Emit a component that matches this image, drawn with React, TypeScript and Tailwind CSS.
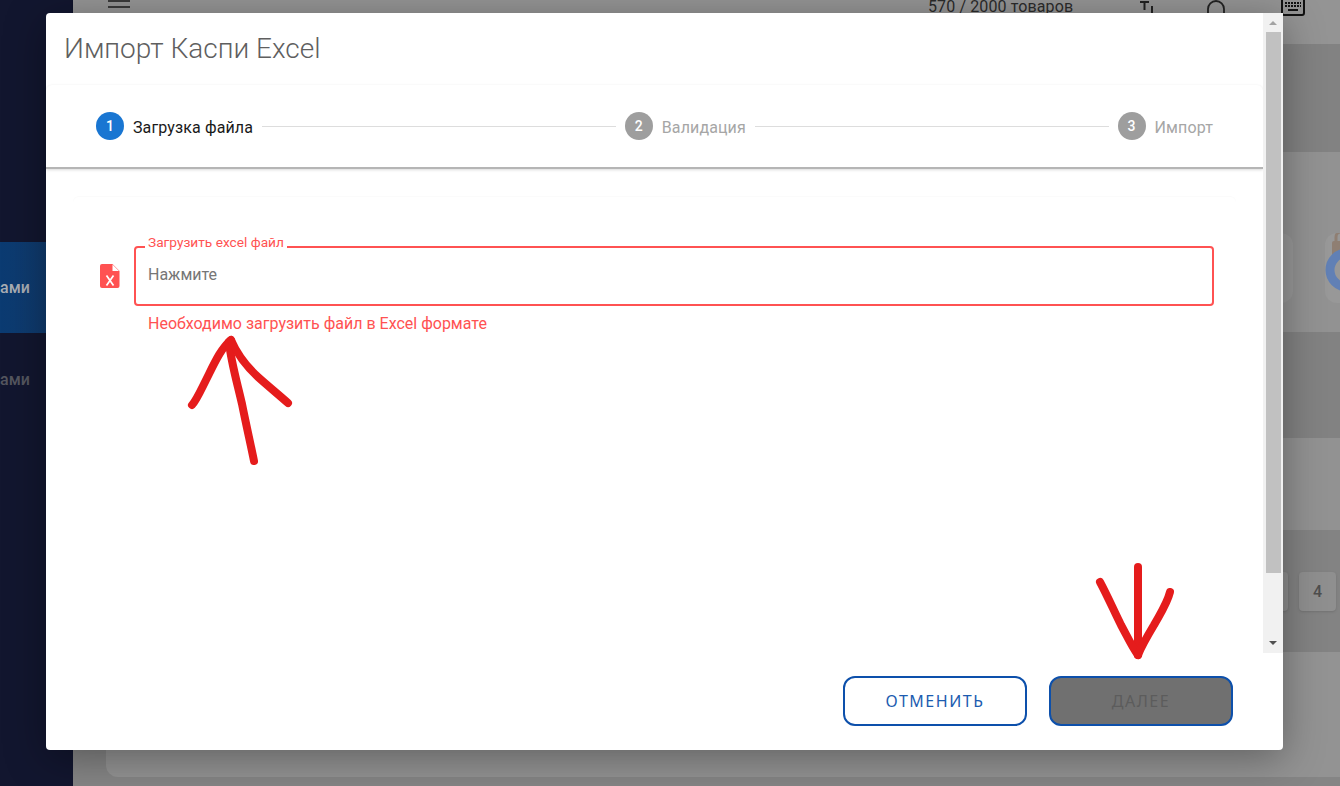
const Step = ({ n, label, active }: { n: number; label: string; active?: boolean }) => (
  <div className="flex items-center gap-[9px]">
    <div
      className={`flex h-7 w-7 items-center justify-center rounded-full text-sm font-medium text-white ${
        active ? "bg-[#1976d2]" : "bg-[#9e9e9e]"
      }`}
    >
      {n}
    </div>
    <span className={`pt-[3px] text-base tracking-[0.12px] ${active ? "text-[#1a1a1a]" : "text-[#a6a6a6]"}`}>{label}</span>
  </div>
);

const Scrollbar = () => (
  <div className="flex w-[20px] shrink-0 flex-col bg-[#f1f1f1]">
    <div className="flex h-[19px] items-center justify-center">
      <div className="h-0 w-0 border-x-[4px] border-b-[4px] border-x-transparent border-b-[#a3a3a3]" />
    </div>
    <div className="ml-[3px] h-[541px] w-[15px] bg-[#c1c1c1]" />
    <div className="flex flex-1 items-end justify-center pb-[8px]">
      <div className="h-0 w-0 border-x-[4px] border-t-[4px] border-x-transparent border-t-[#505050]" />
    </div>
  </div>
);

const FileIcon = () => (
  <svg width="20" height="24" viewBox="0 0 20 24" className="shrink-0">
    <path d="M2 0h10.5L19.500 7v15a2 2 0 0 1-2 2H2a2 2 0 0 1-2-2V2a2 2 0 0 1 2-2z" fill="#ff5252" />
    <path d="M12.500 0.500v6.500h6.500z" fill="#fff" />
    <path d="M6.500 11.500l7 10M13.500 11.500l-7 10" stroke="#fff" strokeWidth="1.700" fill="none" />
  </svg>
);

const Arrows = () => (
  <svg width="1340" height="786" viewBox="0 0 1340 786" className="pointer-events-none absolute left-0 top-0">
    <g fill="none" stroke="#e51c1c" strokeWidth="8" strokeLinecap="round" strokeLinejoin="round">
      <path d="M192 405c4-4 8-13 14-25 8-16 15-32 25-40" />
      <path d="M229 342c2 20 8 40 13 62 4 20 9 42 12 57" />
      <path d="M231 340c7 16 16 27 27 37 10 9 21 18 30 26" />
      <path d="M1138 567v88" />
      <path d="M1100 582c8 15 14 29 21 43 6 11 11 22 17 30" />
      <path d="M1170 592c-3 12-10 22-16 33-6 10-12 20-16 30" />
    </g>
  </svg>
);

export default function App() {
  return (
    <div className="relative flex h-[786px] w-[1340px] overflow-hidden bg-[#858585] font-['Roboto',sans-serif]">
      {/* sidebar */}
      <aside className="w-[73px] shrink-0 bg-[#12162f] pt-[242px] text-base font-medium">
        <div className="flex h-[91px] items-center bg-gradient-to-r from-[#0b3b72] to-[#123a6a] text-[#a8adb3]">ами</div>
        <div className="flex h-[93px] items-center text-[#55565f]">ами</div>
      </aside>

      {/* page behind the dialog */}
      <div className="flex min-w-0 flex-1 flex-col">
        <header className="flex h-[44px] shrink-0 items-start bg-[#949494] text-[#2b2b2b] shadow-[0_1px_3px_rgba(0,0,0,0.3)]">
          <svg width="22" height="9" className="ml-[35px]">
            <path d="M0 1h22M0 7h22" stroke="#3a3a3a" strokeWidth="2" />
          </svg>
          <span className="-mt-[5px] ml-[798px] whitespace-nowrap text-base tracking-[0.12px]">570 / 2000 товаров</span>
          <svg width="16" height="14" className="ml-[66px]">
            <path d="M1 2h9M5.500 2v8M13 6v8" stroke="#222" strokeWidth="2" fill="none" />
          </svg>
          <svg width="20" height="15" className="ml-[51px]">
            <path d="M2 15V9a8 8 0 0 1 16 0v6" stroke="#222" strokeWidth="1.800" fill="none" />
          </svg>
          <svg width="24" height="16" className="ml-[55px]">
            <rect x="1" y="-2" width="22" height="17" rx="2" stroke="#111" strokeWidth="2" fill="none" />
            <path d="M4 3h16M4 6h16" stroke="#111" strokeWidth="2" strokeDasharray="2 1" />
            <path d="M7 10h10" stroke="#111" strokeWidth="2" />
          </svg>
        </header>
        <div className="-mr-5 ml-[33px] flex flex-col overflow-hidden rounded-bl-xl">
          <div className="h-[108px] bg-[#828282]" />
          <div className="flex h-[180px] items-start gap-[32px] bg-[#929292] pl-[1115px] pt-[81px]">
            <div className="h-[70px] w-[72px] shrink-0 rounded-xl bg-[#989898]" />
            <div className="relative h-[70px] w-[60px] shrink-0 overflow-hidden rounded-xl bg-[#989898]">
              <svg width="40" height="70" className="absolute left-0 top-0">
                <rect x="7" y="8" width="18" height="17" rx="2" fill="#8f7f73" />
                <path d="M11 8V4a5 5 0 0 1 10 0v4" stroke="#8f7f73" strokeWidth="3" fill="none" />
                <circle cx="22" cy="37" r="17" stroke="#6180b5" strokeWidth="9" fill="none" />
              </svg>
            </div>
          </div>
          <div className="h-[106px] bg-[#828282]" />
          <div className="h-[92px] bg-[#929292]" />
          <div className="flex h-[122px] items-start gap-[11px] bg-[#838383] pl-[1145px] pt-[42px]">
            <div className="h-[39px] w-[37px] rounded bg-[#8f8f8f] shadow-sm" />
            <div className="flex h-[39px] w-[37px] items-center justify-center rounded bg-[#8f8f8f] text-base font-medium text-[#4e4e4e] shadow-sm">
              4
            </div>
          </div>
          <div className="h-[125px] bg-[#939393]" />
        </div>
      </div>

      {/* dialog */}
      <div className="absolute left-[46px] top-[13px] flex h-[737px] w-[1237px] flex-col rounded bg-white shadow-[0_8px_40px_rgba(0,0,0,0.35)]">
        <div className="flex min-h-0 flex-1">
          <div className="flex min-w-0 flex-1 flex-col">
            <div className="flex h-[72px] shrink-0 items-center pl-[18px] text-[28px] font-light text-[#5f5f5f]">Импорт Каспи Excel</div>
            <div className="flex h-[84px] shrink-0 items-center rounded-t-md border-b-2 border-[#b5b5b5] px-[50px] shadow-[0_1px_3px_rgba(0,0,0,0.15)]">
              <Step n={1} label="Загрузка файла" active />
              <div className="mx-[9px] h-px flex-1 bg-[#dddddd]" />
              <Step n={2} label="Валидация" />
              <div className="mx-[9px] h-px flex-1 bg-[#dddddd]" />
              <Step n={3} label="Импорт" />
            </div>
            <div className="mx-[27px] mt-[28px] flex items-start gap-[14px] rounded-t-md pl-[27px] pr-[22px] pt-[49px] shadow-[0_-1px_1px_rgba(0,0,0,0.02)]">
              <div className="pt-[18px]">
                <FileIcon />
              </div>
              <div className="flex-1">
                <div className="relative flex h-[60px] items-center rounded border-2 border-[#ff5252] pb-[3px] pl-3 text-base text-[#767676]">
                  <span className="absolute -top-[15px] left-[9px] bg-white px-[3px] text-[13.7px] leading-[18px] text-[#ff5252]">
                    Загрузить excel файл
                  </span>
                  Нажмите
                </div>
                <p className="mt-[6px] pl-[14px] text-base text-[#ff5252]">Необходимо загрузить файл в Excel формате</p>
              </div>
            </div>
          </div>
          <Scrollbar />
        </div>
        <div className="flex h-[97px] shrink-0 items-start justify-end gap-[22px] pr-[50px] pt-[23px] font-['Noto_Sans',sans-serif] text-base tracking-[1.5px]">
          <button className="h-[50px] w-[184px] rounded-xl border-2 border-[#0d50ab] bg-white text-[#1c5cb0]">ОТМЕНИТЬ</button>
          <button className="h-[50px] w-[184px] rounded-xl border-2 border-[#0d50ab] bg-[#707070] text-[#5c5c5c]">ДАЛЕЕ</button>
        </div>
      </div>

      <Arrows />
    </div>
  );
}
